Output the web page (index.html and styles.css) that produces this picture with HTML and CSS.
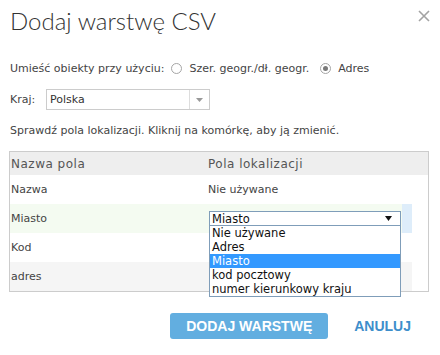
FILE: index.html
```html
<!DOCTYPE html>
<html lang="pl">
<head>
    <meta charset="UTF-8">
    <meta name="viewport" content="width=device-width, initial-scale=1.0">
    <title>Dodaj warstwę CSV</title>
    <link rel="stylesheet" href="styles.css">
</head>
<body>
    <div class="dialog">
        <div class="dialog-head">
            <h1 class="title">Dodaj warstwę CSV</h1>
            <span class="close">
                <svg width="12" height="12" viewBox="0 0 12 12"><path d="M1 1L11 11M11 1L1 11" stroke="#a3a3a3" stroke-width="1.6" fill="none"/></svg>
            </span>
        </div>

        <div class="place-row">
            <span>Umieść obiekty przy użyciu:</span>
            <label class="radio first"><span class="radio-dot"></span>Szer. geogr./dł. geogr.</label>
            <label class="radio"><span class="radio-dot checked"></span>Adres</label>
        </div>

        <div class="country-row">
            <span class="country-label">Kraj:</span>
            <div class="combo">
                <span class="combo-value">Polska</span>
                <span class="combo-arrow">
                    <svg width="7" height="4" viewBox="0 0 7 4"><path d="M0 0H7L3.5 4Z" fill="#999"/></svg>
                </span>
            </div>
        </div>

        <p class="hint">Sprawdź pola lokalizacji. Kliknij na komórkę, aby ją zmienić.</p>

        <div class="fields">
            <div class="fields-head">
                <span class="col-name">Nazwa pola</span>
                <span class="col-loc">Pola lokalizacji</span>
            </div>
            <div class="field-row">
                <span class="col-name">Nazwa</span>
                <span class="col-loc">Nie używane</span>
            </div>
            <div class="field-row hover">
                <span class="col-name">Miasto</span>
                <div class="col-loc editing">
                    <div class="picker">
                        <span>Miasto</span>
                        <svg width="7" height="5" viewBox="0 0 7 5"><path d="M0 0H7L3.5 5Z" fill="#111"/></svg>
                    </div>
                    <ul class="picker-list">
                        <li>Nie używane</li>
                        <li>Adres</li>
                        <li class="selected">Miasto</li>
                        <li>kod pocztowy</li>
                        <li>numer kierunkowy kraju</li>
                    </ul>
                </div>
            </div>
            <div class="field-row">
                <span class="col-name">Kod</span>
                <span class="col-loc"></span>
            </div>
            <div class="field-row alt">
                <span class="col-name">adres</span>
                <span class="col-loc"></span>
            </div>
        </div>

        <div class="actions">
            <button class="btn-primary">DODAJ WARSTWĘ</button>
            <button class="btn-link">ANULUJ</button>
        </div>
    </div>
</body>
</html>
```

FILE: styles.css
```css
body {
    margin: 0;
    background: #fff;
    font-family: "DejaVu Sans", Verdana, sans-serif;
    font-size: 11px;
    color: #444;
}

.dialog {
    width: 440px;
    height: 355px;
    padding: 0 12px 0 10px;
    box-sizing: border-box;
}

.dialog-head {
    display: flex;
    justify-content: space-between;
    align-items: flex-start;
    height: 50px;
}

.title {
    margin: 6px 0 0;
    font-family: Lato, "Open Sans", sans-serif;
    font-weight: 300;
    font-size: 24px;
    line-height: 30px;
    color: #333;
}

.close {
    display: flex;
    margin-top: 10px;
    margin-right: -2px;
}

.place-row {
    display: flex;
    align-items: center;
    height: 20px;
    margin-top: 8px;
}

.radio {
    display: flex;
    align-items: center;
    margin-left: 11px;
}

.radio.first {
    margin-left: 7px;
}

.radio-dot {
    width: 11px;
    height: 11px;
    box-sizing: border-box;
    border: 1px solid #a5a5a5;
    border-radius: 50%;
    margin-right: 7px;
    display: flex;
    align-items: center;
    justify-content: center;
}

.radio-dot.checked::after {
    content: "";
    width: 5px;
    height: 5px;
    border-radius: 50%;
    background: #7a7a7a;
}

.country-row {
    display: flex;
    align-items: center;
    height: 21px;
    margin-top: 11px;
}

.country-label {
    width: 36px;
}

.combo {
    display: flex;
    width: 164px;
    height: 21px;
    box-sizing: border-box;
    border: 1px solid #ccc;
}

.combo-value {
    flex: 1;
    padding-left: 3px;
    line-height: 19px;
    color: #333;
}

.combo-arrow {
    width: 19px;
    border-left: 1px solid #ddd;
    display: flex;
    align-items: center;
    justify-content: center;
}

.hint {
    margin: 14px 0 0;
    line-height: 14px;
}

.fields {
    margin: 13px 0 0 -1px;
    width: 420px;
    box-sizing: border-box;
    border: 1px solid #ccc;
}

.fields-head {
    display: flex;
    height: 23px;
    align-items: center;
    background: #eee;
    font-size: 12px;
    letter-spacing: 0.5px;
    color: #555;
}

.field-row {
    display: flex;
    align-items: center;
    width: 402px;
    height: 29px;
}

.field-row.hover {
    background: #f4fbf1;
}

.field-row.alt {
    background: #f5f5f5;
}

.col-name {
    width: 196px;
    padding-left: 1px;
}

.col-loc {
    padding-left: 1px;
}

.col-loc.editing {
    position: relative;
    align-self: stretch;
    flex: 1;
    display: flex;
    align-items: center;
    padding-left: 2px;
    background: linear-gradient(to right, transparent 195px, #deedfa 195px);
}

.picker {
    display: flex;
    justify-content: space-between;
    align-items: center;
    width: 192px;
    height: 16px;
    box-sizing: border-box;
    border: 1px solid #7f9db9;
    background: #fff;
    padding: 0 8px 0 2px;
    font-size: 11.5px;
    color: #111;
}

.picker-list {
    position: absolute;
    left: 2px;
    top: 21px;
    width: 192px;
    box-sizing: border-box;
    margin: 0;
    padding: 0;
    list-style: none;
    border: 1px solid #7f9db9;
    background: #fff;
    font-size: 11.5px;
    color: #111;
}

.picker-list li {
    height: 14px;
    line-height: 14px;
    padding-left: 2px;
}

.picker-list li.selected {
    background: #3399ff;
    color: #fff;
}

.actions {
    display: flex;
    justify-content: flex-end;
    align-items: center;
    gap: 26px;
    margin: 21px 17px 0 0;
}

.btn-primary {
    height: 26px;
    padding: 0 16px;
    border: none;
    border-radius: 3px;
    background: #62aee0;
    color: #fff;
    font-family: "Liberation Sans", Arial, sans-serif;
    font-weight: bold;
    font-size: 14px;
    cursor: pointer;
}

.btn-link {
    padding: 0;
    border: none;
    background: none;
    color: #3d8ecb;
    font-family: "Liberation Sans", Arial, sans-serif;
    font-weight: bold;
    font-size: 14px;
    cursor: pointer;
}
```
